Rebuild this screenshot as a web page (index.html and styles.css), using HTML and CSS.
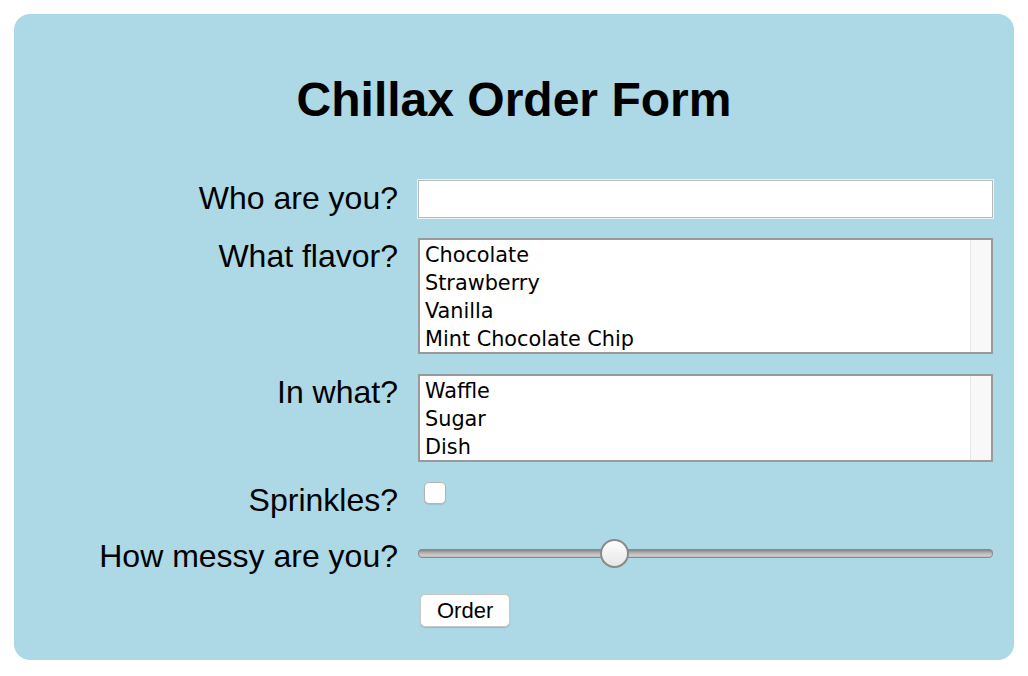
FILE: index.html
```html
<!DOCTYPE html>
<html lang="en">
<head>
  <meta charset="UTF-8">
  <meta name="viewport" content="width=device-width, initial-scale=1.0">
  <title>Chillax Order Form</title>
  <link rel="stylesheet" href="styles.css">
</head>
<body>
  <div class="card">
    <h1>Chillax Order Form</h1>
    <form class="order-form">
      <label for="name">Who are you?</label>
      <input type="text" id="name" class="text-input">

      <label>What flavor?</label>
      <div class="listbox flavors" role="listbox">
        <div class="options">
          <div class="option">Chocolate</div>
          <div class="option">Strawberry</div>
          <div class="option">Vanilla</div>
          <div class="option">Mint Chocolate Chip</div>
        </div>
        <div class="track"></div>
      </div>

      <label>In what?</label>
      <div class="listbox vessels" role="listbox">
        <div class="options">
          <div class="option">Waffle</div>
          <div class="option">Sugar</div>
          <div class="option">Dish</div>
        </div>
        <div class="track"></div>
      </div>

      <label for="sprinkles">Sprinkles?</label>
      <input type="checkbox" id="sprinkles" class="checkbox">

      <label for="messy">How messy are you?</label>
      <input type="range" id="messy" class="slider" min="1" max="10" value="4">

      <button type="button" class="order-btn">Order</button>
    </form>
  </div>
</body>
</html>
```

FILE: styles.css
```css
body {
  margin: 0;
  font-family: "Liberation Sans", Arial, sans-serif;
  background: #fff;
}

.card {
  margin: 14px;
  padding-top: 58px;
  height: 646px;
  box-sizing: border-box;
  background: #add8e6;
  border-radius: 16px;
}

h1 {
  margin: 0 0 52px;
  font-size: 48px;
  line-height: 56px;
  text-align: center;
  color: #000;
}

.order-form {
  display: grid;
  grid-template-columns: 1fr 575px;
  column-gap: 20px;
  row-gap: 20px;
  padding-right: 21px;
}

.order-form label {
  font-size: 32px;
  line-height: 36px;
  text-align: right;
  color: #000;
  align-self: start;
}

.text-input {
  height: 38px;
  margin: 0;
  box-sizing: border-box;
  border: 1px solid #b9b9b9;
  box-shadow: 0 0 0 1px #e9f4f7;
  background: #fff;
  font-size: 20px;
}

.listbox {
  display: flex;
  border: 2px solid #9a9a9a;
  background: #fff;
  overflow: hidden;
}

.flavors {
  height: 116px;
  box-sizing: border-box;
}

.vessels {
  height: 88px;
  box-sizing: border-box;
}

.options {
  flex: 1;
  padding: 1px 5px 0;
  font-family: "DejaVu Sans", sans-serif;
  font-size: 20.8px;
  line-height: 28px;
  color: #000;
}

.track {
  width: 20px;
  background: #f8f8f8;
  border-left: 1px solid #e6e6e6;
}

.checkbox {
  -webkit-appearance: none;
  appearance: none;
  width: 22px;
  height: 22px;
  margin: 0 0 0 6px;
  border: 1px solid #b4b4b4;
  border-radius: 5px;
  background: #fff;
  box-shadow: 0 1px 1px rgba(0, 0, 0, 0.1);
  justify-self: start;
}

.slider {
  -webkit-appearance: none;
  appearance: none;
  width: 100%;
  height: 30px;
  margin: 0;
  background: transparent;
  align-self: start;
}

.slider::-webkit-slider-runnable-track {
  height: 9px;
  border-radius: 5px;
  background: linear-gradient(#737373, #a8a8a8 35%, #cdcdcd 70%, #b0b0b0);
  box-shadow: inset 0 0 0 1px #8a8a8a;
}

.slider::-webkit-slider-thumb {
  -webkit-appearance: none;
  box-sizing: border-box;
  width: 29px;
  height: 29px;
  margin-top: -10px;
  border-radius: 50%;
  border: 2px solid #8a8a8a;
  background: linear-gradient(#fdfdfd, #f2f2f2 50%, #e6e6e6);
}

.order-btn {
  grid-column: 2;
  justify-self: start;
  height: 33px;
  margin-left: 2px;
  padding: 0 16px;
  font-family: "Liberation Sans", Arial, sans-serif;
  font-size: 22px;
  color: #000;
  background: #fff;
  border: 1px solid #c6c6c6;
  border-radius: 5px;
  box-shadow: 0 1px 1px rgba(0, 0, 0, 0.15);
}
```
